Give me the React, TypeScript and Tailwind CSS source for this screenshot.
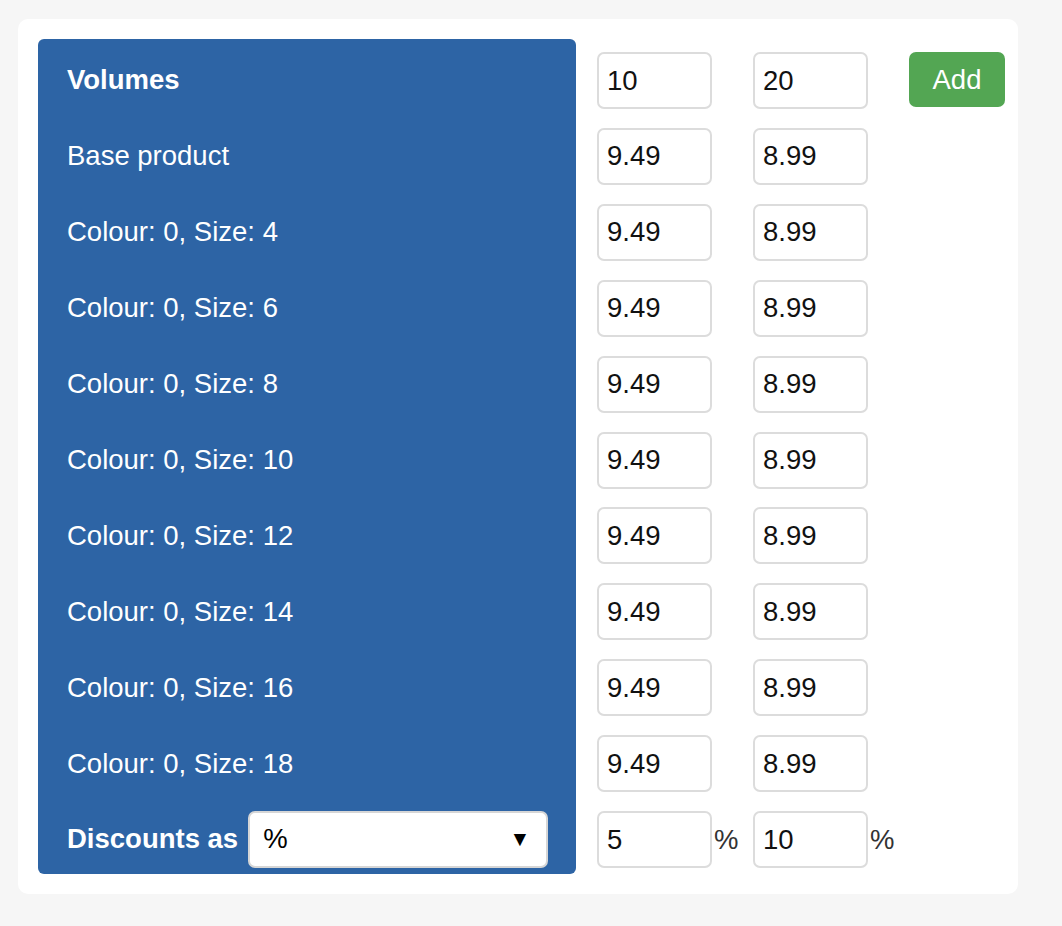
const rows = [
  'Base product',
  'Colour: 0, Size: 4',
  'Colour: 0, Size: 6',
  'Colour: 0, Size: 8',
  'Colour: 0, Size: 10',
  'Colour: 0, Size: 12',
  'Colour: 0, Size: 14',
  'Colour: 0, Size: 16',
  'Colour: 0, Size: 18',
];

function Field({ value, suffix }: { value: string; suffix?: string }) {
  return (
    <div className="flex items-center w-[156px] shrink-0">
      <input
        defaultValue={value}
        className="w-[115px] h-[57px] border-2 border-[#dcdcdc] rounded-[7px] bg-white px-[8px] text-[27.5px] text-[#111] outline-none"
      />
      {suffix && <span className="ml-[2px] text-[27.5px] text-[#333]">{suffix}</span>}
    </div>
  );
}

export default function App() {
  return (
    <div
      className="min-h-screen bg-[#f6f6f6] pt-[19px] pl-[18px]"
      style={{ fontFamily: '"Liberation Sans", Arial, sans-serif' }}
    >
      <div className="flex w-[1000px] h-[875px] bg-white rounded-[10px] p-[20px]">
        <div className="flex flex-col shrink-0 w-[538px] bg-[#2d64a5] rounded-[6px] pl-[29px] text-white text-[27.5px]">
          <div className="h-[76px] pt-[13px]">
            <div className="h-[56px] flex items-center font-bold">Volumes</div>
          </div>
          {rows.map((r) => (
            <div key={r} className="h-[76px] pt-[13px]">
              <div className="h-[56px] flex items-center">{r}</div>
            </div>
          ))}
          <div className="h-[76px] pt-[13px]">
            <div className="h-[56px] flex items-center gap-[10px]">
              <span className="font-bold">Discounts as</span>
              <button className="flex items-center justify-between shrink-0 w-[300px] h-[57px] bg-white border-2 border-[#d6d6d6] rounded-[7px] pl-[13px] pr-[16px] text-black">
                <span>%</span>
                <span className="text-[21px]">▼</span>
              </button>
            </div>
          </div>
        </div>

        <div className="flex flex-col shrink-0 ml-[21px]">
          <div className="h-[76px] pt-[13px] flex items-start">
            <Field value="10" />
            <Field value="20" />
            <button className="w-[96px] h-[55px] bg-[#53a653] rounded-[7px] text-white text-[27.5px]">Add</button>
          </div>
          {rows.map((r) => (
            <div key={r} className="h-[76px] pt-[13px] flex items-start">
              <Field value="9.49" />
              <Field value="8.99" />
            </div>
          ))}
          <div className="h-[76px] pt-[13px] flex items-start">
            <Field value="5" suffix="%" />
            <Field value="10" suffix="%" />
          </div>
        </div>
      </div>
    </div>
  );
}
